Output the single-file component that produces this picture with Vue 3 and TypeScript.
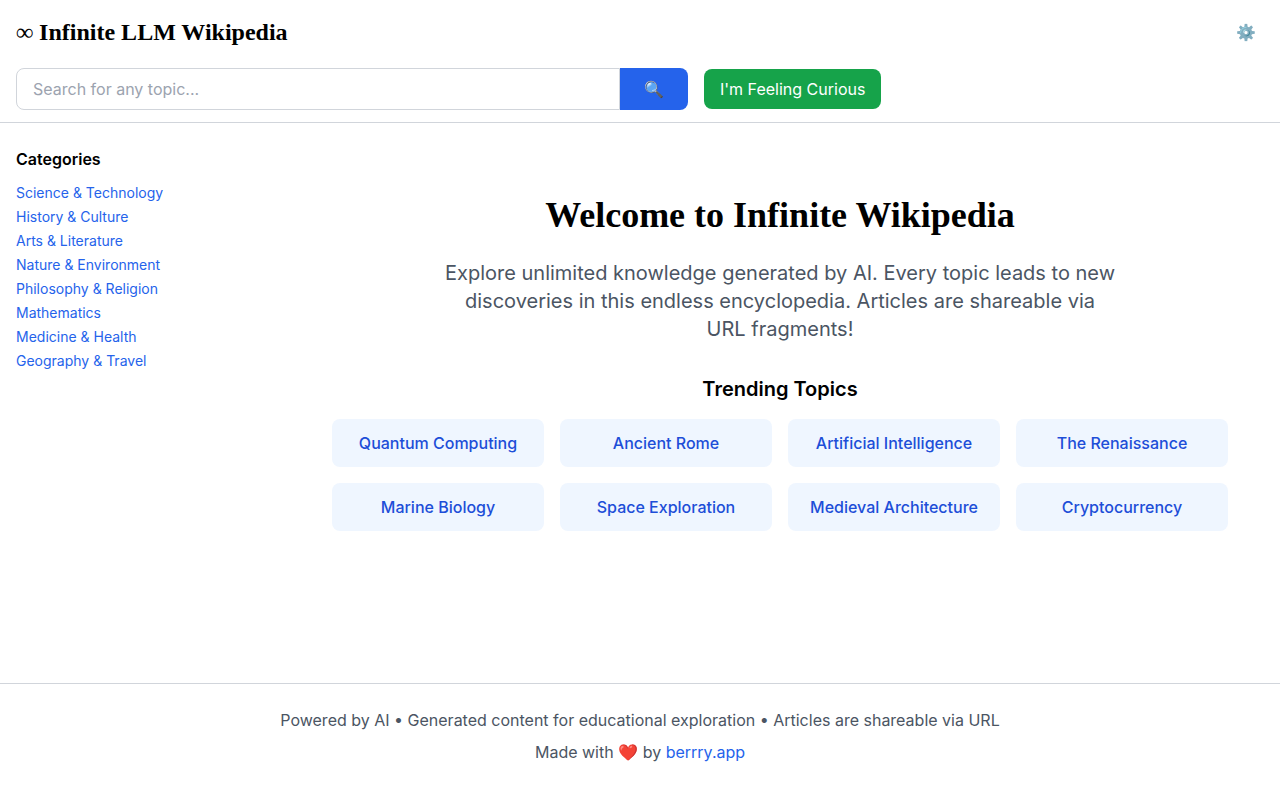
<script setup lang="ts">
import { ref } from 'vue'

const query = ref<string>('')

const categories: string[] = [
  'Science & Technology',
  'History & Culture',
  'Arts & Literature',
  'Nature & Environment',
  'Philosophy & Religion',
  'Mathematics',
  'Medicine & Health',
  'Geography & Travel',
]

const topics: string[] = [
  'Quantum Computing',
  'Ancient Rome',
  'Artificial Intelligence',
  'The Renaissance',
  'Marine Biology',
  'Space Exploration',
  'Medieval Architecture',
  'Cryptocurrency',
]

function openTopic(topic: string): void {
  window.location.hash = encodeURIComponent(topic)
}

function search(): void {
  const topic = query.value.trim()
  if (topic) openTopic(topic)
}

function openRandom(): void {
  openTopic(topics[Math.floor(Math.random() * topics.length)])
}
</script>

<template>
  <div class="page">
    <header class="header">
      <div class="title-row">
        <h1 class="brand">∞ Infinite LLM Wikipedia</h1>
        <button class="settings" type="button" aria-label="Settings">⚙️</button>
      </div>
      <div class="search-row">
        <form class="search" @submit.prevent="search">
          <input
            v-model="query"
            class="search-input"
            type="text"
            aria-label="Search for any topic"
            placeholder="Search for any topic..."
          />
          <button class="search-button" type="submit" aria-label="Search">🔍</button>
        </form>
        <button class="curious" type="button" @click="openRandom">I'm Feeling Curious</button>
      </div>
    </header>

    <div class="body">
      <aside class="sidebar">
        <h3 class="sidebar-title">Categories</h3>
        <ul class="categories">
          <li v-for="category in categories" :key="category">
            <a class="link" :href="'#' + encodeURIComponent(category)">{{ category }}</a>
          </li>
        </ul>
      </aside>

      <main class="main">
        <section class="welcome">
          <h2 class="welcome-title">Welcome to Infinite Wikipedia</h2>
          <p class="intro">
            Explore unlimited knowledge generated by AI. Every topic leads to new discoveries in
            this endless encyclopedia. Articles are shareable via URL fragments!
          </p>
          <h3 class="trending-title">Trending Topics</h3>
          <div class="topics">
            <button
              v-for="topic in topics"
              :key="topic"
              class="topic"
              type="button"
              @click="openTopic(topic)"
            >
              {{ topic }}
            </button>
          </div>
        </section>
      </main>
    </div>

    <footer class="footer">
      <p>Powered by AI • Generated content for educational exploration • Articles are shareable via URL</p>
      <p>Made with ❤️ by <a class="link" href="#berrry">berrry.app</a></p>
    </footer>
  </div>
</template>

<style>
body {
  margin: 0;
  background: #ffffff;
}
</style>

<style scoped>
.page,
.page * {
  box-sizing: border-box;
}

.page {
  display: flex;
  flex-direction: column;
  min-height: 100vh;
  font-family: Inter, sans-serif;
  font-size: 16px;
  line-height: 24px;
  color: #000000;
}

h1,
h2,
h3,
p,
ul {
  margin: 0;
  padding: 0;
}

ul {
  list-style: none;
}

button,
input {
  margin: 0;
  font: inherit;
}

button {
  border: 0;
  cursor: pointer;
}

.link {
  color: #2563eb;
  text-decoration: none;
}

.link:hover {
  text-decoration: underline;
}

.header {
  padding: 12px 16px;
  border-bottom: 1px solid #d1d5db;
}

.title-row {
  display: flex;
  align-items: center;
  justify-content: space-between;
  margin-bottom: 16px;
}

.brand {
  font-family: "Liberation Serif", serif;
  font-size: 24px;
  font-weight: 700;
  line-height: 32px;
}

.settings {
  padding: 8px;
  border-radius: 8px;
  background: transparent;
}

.search-row {
  display: flex;
  align-items: center;
  gap: 16px;
}

.search {
  display: flex;
  flex: 1;
  max-width: 672px;
}

.search-input {
  flex: 1;
  min-width: 0;
  padding: 8px 16px;
  border: 1px solid #d1d5db;
  border-radius: 8px 0 0 8px;
  background: #ffffff;
  color: #000000;
}

.search-input::placeholder {
  color: #9ca3af;
}

.search-button {
  padding: 8px 24px;
  border-radius: 0 8px 8px 0;
  background: #2563eb;
  color: #ffffff;
}

.curious {
  padding: 8px 16px;
  border-radius: 8px;
  background: #16a34a;
  color: #ffffff;
}

.body {
  display: flex;
  flex: 1;
  gap: 24px;
  padding: 24px 16px;
}

.sidebar {
  width: 256px;
  flex-shrink: 0;
}

.sidebar-title {
  margin-bottom: 12px;
  font-size: 16px;
  font-weight: 600;
}

.categories {
  display: grid;
  gap: 4px;
  font-size: 14px;
  line-height: 20px;
}

.main {
  flex: 1;
  min-width: 0;
}

.welcome {
  max-width: 896px;
  margin: 0 auto;
  padding: 48px 0;
  text-align: center;
}

.welcome-title {
  margin-bottom: 24px;
  font-family: "Liberation Serif", serif;
  font-size: 36px;
  font-weight: 700;
  line-height: 40px;
}

.intro {
  max-width: 672px;
  margin: 0 auto 32px;
  font-size: 20px;
  line-height: 28px;
  color: #4b5563;
}

.trending-title {
  margin-bottom: 16px;
  font-size: 20px;
  font-weight: 600;
  line-height: 28px;
}

.topics {
  display: grid;
  grid-template-columns: repeat(4, 1fr);
  gap: 16px;
}

.topic {
  padding: 12px;
  border-radius: 8px;
  background: #eff6ff;
  color: #1d4ed8;
  font-weight: 500;
}

.footer {
  display: grid;
  gap: 8px;
  padding: 24px 16px 36px;
  border-top: 1px solid #d1d5db;
  text-align: center;
  color: #4b5563;
}
</style>
